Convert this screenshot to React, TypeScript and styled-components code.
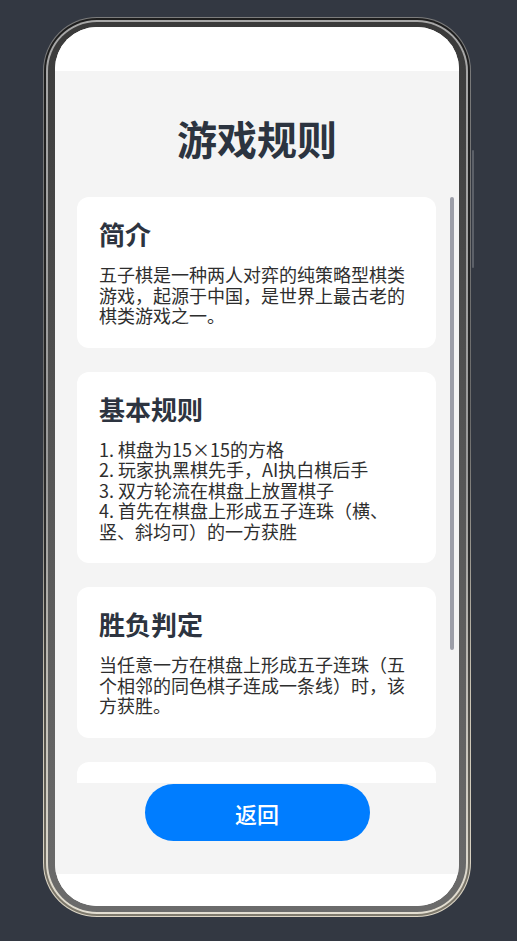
import styled, { createGlobalStyle } from 'styled-components';

const GlobalStyle = createGlobalStyle`
  html, body {
    margin: 0;
    padding: 0;
    background: #333842;
  }
  body {
    font-family: "Noto Sans CJK SC", "Noto Sans", sans-serif;
  }
`;

interface Rule {
  title: string;
  lines: string[];
}

const rules: Rule[] = [
  {
    title: '简介',
    lines: ['五子棋是一种两人对弈的纯策略型棋类游戏，起源于中国，是世界上最古老的棋类游戏之一。'],
  },
  {
    title: '基本规则',
    lines: [
      '1. 棋盘为15×15的方格',
      '2. 玩家执黑棋先手，AI执白棋后手',
      '3. 双方轮流在棋盘上放置棋子',
      '4. 首先在棋盘上形成五子连珠（横、竖、斜均可）的一方获胜',
    ],
  },
  {
    title: '胜负判定',
    lines: ['当任意一方在棋盘上形成五子连珠（五个相邻的同色棋子连成一条线）时，该方获胜。'],
  },
  {
    title: '操作说明',
    lines: ['点击棋盘上的交叉点即可落子，落子后AI会自动思考并落下白棋。'],
  },
];

// visible height / total content height of the list, as in the screenshot
const THUMB_RATIO = 452 / 585;

const App = () => {
  return (
    <Page>
      <GlobalStyle />
      <Frame>
        <SideKey />
        <Bezel>
          <Rim>
            <Inner>
              <Screen>
                <StatusBar />
                <Main>
                  <PageTitle>游戏规则</PageTitle>
                  <ScrollWrap>
                    <ScrollArea>
                      {rules.map((r) => (
                        <Card key={r.title}>
                          <CardTitle>{r.title}</CardTitle>
                          <CardBody>
                            {r.lines.map((l) => (
                              <Line key={l}>{l}</Line>
                            ))}
                          </CardBody>
                        </Card>
                      ))}
                    </ScrollArea>
                    <ScrollThumb style={{ height: `${THUMB_RATIO * 100}%` }} />
                  </ScrollWrap>
                  <Footer>
                    <BackButton>返回</BackButton>
                  </Footer>
                </Main>
                <HomeBar />
              </Screen>
            </Inner>
          </Rim>
        </Bezel>
      </Frame>
    </Page>
  );
};

export default App;

const Page = styled.div`
  min-height: 100vh;
  display: flex;
  align-items: flex-start;
  padding: 17px 0 0 43px;
  box-sizing: border-box;
`;

const Frame = styled.div`
  position: relative;
  width: 428px;
  height: 900px;
  box-sizing: border-box;
  padding: 1px;
  border-radius: 54px;
  background: linear-gradient(180deg, #7c7c7c 0%, #6a6a6a 45%, #cbc4b4 75%, #ddd6c6 100%);
`;

const SideKey = styled.div`
  position: absolute;
  right: -3px;
  top: 133px;
  width: 2px;
  height: 118px;
  border-radius: 1px;
  background: #5c6068;
`;

const Bezel = styled.div`
  height: 100%;
  box-sizing: border-box;
  padding: 2px;
  border-radius: 53px;
  background: linear-gradient(180deg, #1e1e1e 0%, #2c2c2c 60%, #7f7a6d 100%);
`;

const Rim = styled.div`
  height: 100%;
  box-sizing: border-box;
  padding: 2px;
  border-radius: 51px;
  background: linear-gradient(180deg, #a8a8a8 0%, #9a9a9a 50%, #e4dfd2 100%);
`;

const Inner = styled.div`
  height: 100%;
  box-sizing: border-box;
  padding: 5px 7px 6px;
  border-radius: 49px;
  background: linear-gradient(180deg, #3a3a3a 0%, #555 50%, #6b6b6b 100%);
`;

const Screen = styled.div`
  height: 100%;
  display: flex;
  flex-direction: column;
  border-radius: 42px;
  overflow: hidden;
  background: #fff;
`;

const StatusBar = styled.div`
  height: 44px;
  flex-shrink: 0;
  background: #fff;
`;

const HomeBar = styled.div`
  height: 32px;
  flex-shrink: 0;
  background: #fff;
`;

const Main = styled.div`
  flex: 1;
  min-height: 0;
  display: flex;
  flex-direction: column;
  background: #f4f4f4;
`;

const PageTitle = styled.h1`
  margin: 0;
  padding: 43px 0 35px;
  text-align: center;
  font-size: 40px;
  line-height: 48px;
  font-weight: 700;
  color: #2c3440;
`;

const ScrollWrap = styled.div`
  position: relative;
  flex: 1;
  min-height: 0;
  display: flex;
`;

const ScrollArea = styled.div`
  flex: 1;
  min-height: 0;
  overflow-y: auto;
  display: flex;
  flex-direction: column;
  gap: 24px;
  padding: 0 23px 43px 22px;
  scrollbar-width: none;

  &::-webkit-scrollbar {
    display: none;
  }
`;

const ScrollThumb = styled.div`
  position: absolute;
  top: 0;
  right: 5px;
  width: 4px;
  border-radius: 2px;
  background: #9c9ea8;
  pointer-events: none;
`;

const Card = styled.section`
  flex-shrink: 0;
  background: #fff;
  border-radius: 12px;
  padding: 22px;
`;

const CardTitle = styled.h2`
  margin: 0 0 15px;
  font-size: 26px;
  line-height: 30px;
  font-weight: 700;
  color: #2d3440;
`;

const CardBody = styled.div`
  font-size: 18px;
  line-height: 20.5px;
  color: #2e2e2e;
`;

const Line = styled.div``;

const Footer = styled.div`
  flex-shrink: 0;
  display: flex;
  justify-content: center;
  padding: 1px 0 33px;
`;

const BackButton = styled.button`
  width: 225px;
  height: 57px;
  border: none;
  border-radius: 29px;
  background: #007dff;
  color: #fff;
  font-family: inherit;
  font-size: 22px;
  font-weight: 500;
  cursor: pointer;
`;
